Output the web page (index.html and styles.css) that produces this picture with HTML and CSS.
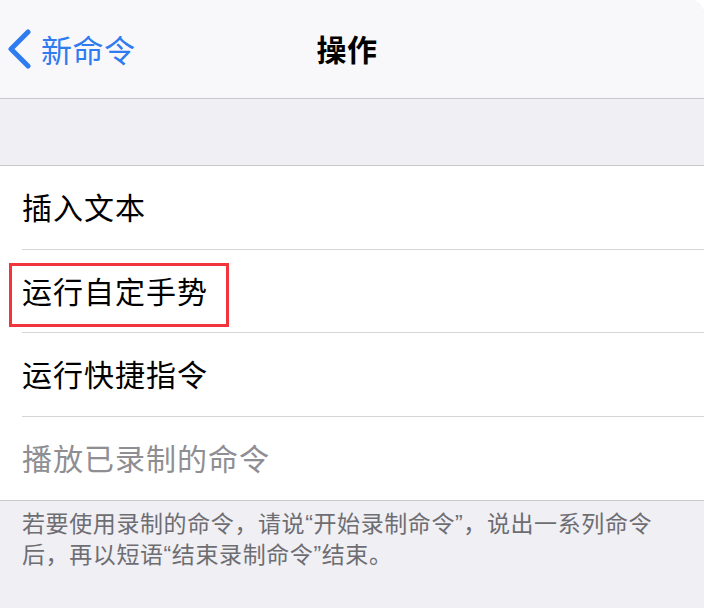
FILE: index.html
```html
<!DOCTYPE html>
<html lang="zh-CN">
<head>
<meta charset="utf-8">
<title>操作</title>
<link rel="stylesheet" href="styles.css">
</head>
<body>
<div class="screen">
  <header class="nav">
    <div class="back">
      <svg class="chev" width="26" height="40" viewBox="0 0 26 40" aria-hidden="true">
        <path d="M21 3 L4 20 L21 37" fill="none" stroke="#2f7bf0" stroke-width="5" stroke-linecap="round" stroke-linejoin="round"/>
      </svg>
      <span class="back-label">新命令</span>
    </div>
    <h1 class="title">操作</h1>
    <div class="spacer"></div>
  </header>
  <div class="gap"></div>
  <ul class="group">
    <li class="row"><span class="cell">插入文本</span></li>
    <li class="row"><span class="cell">运行自定手势</span><span class="highlight"></span></li>
    <li class="row"><span class="cell">运行快捷指令</span></li>
    <li class="row"><span class="cell disabled">播放已录制的命令</span></li>
  </ul>
  <p class="footer">若要使用录制的命令，请说“开始录制命令”，说出一系列命令<br>后，再以短语“结束录制命令”结束。</p>
</div>
</body>
</html>
```

FILE: styles.css
```css
* { box-sizing: border-box; }
html, body { margin: 0; padding: 0; background: #ffffff; }
body { width: 706px; height: 608px; overflow: hidden; }
.screen {
  width: 704px;
  height: 608px;
  background: #efeff4;
  font-family: "Liberation Sans", "Noto Sans CJK SC", sans-serif;
  border-top-right-radius: 14px;
  overflow: hidden;
}
.nav {
  height: 99px;
  background: #f8f8fa;
  border-bottom: 1px solid #c9c8cd;
  display: grid;
  grid-template-columns: 1fr auto 1fr;
  align-items: center;
  padding: 0 10px 2px 0;
}
.back {
  display: flex;
  align-items: center;
  padding-left: 7px;
  color: #2f7bf0;
}
.chev { display: block; margin-top: 1px; }
.back-label {
  font-family: "Noto Sans CJK SC", sans-serif;
  font-size: 31px;
  margin-left: 8px;
  letter-spacing: 0.5px;
}
.title {
  margin: 0;
  font-family: "Noto Sans CJK SC", sans-serif;
  font-size: 30px;
  font-weight: 700;
  color: #000;
  letter-spacing: 0.5px;
}
.gap { height: 66px; }
.group {
  list-style: none;
  margin: 0;
  padding: 0;
  background: #ffffff;
  border-top: 1px solid #c9c8cd;
  border-bottom: 1px solid #c9c8cd;
}
.row {
  position: relative;
  padding-left: 22px;
}
.cell {
  display: flex;
  align-items: center;
  height: 83.5px;
  font-family: "Noto Sans CJK SC", sans-serif;
  font-size: 30px;
  letter-spacing: 1px;
  color: #000;
  border-bottom: 1px solid #d6d6da;
  padding-bottom: 2px;
}
.row:last-child .cell { border-bottom: none; }
.cell.disabled { color: #8e8e93; }
.highlight {
  position: absolute;
  left: 9px;
  top: 13px;
  width: 220px;
  height: 64px;
  border: 3px solid #f2343c;
}
.footer {
  margin: 0;
  padding: 8px 10px 0 22px;
  font-size: 23px;
  line-height: 31px;
  letter-spacing: 0.6px;
  color: #6d6d72;
}
```
